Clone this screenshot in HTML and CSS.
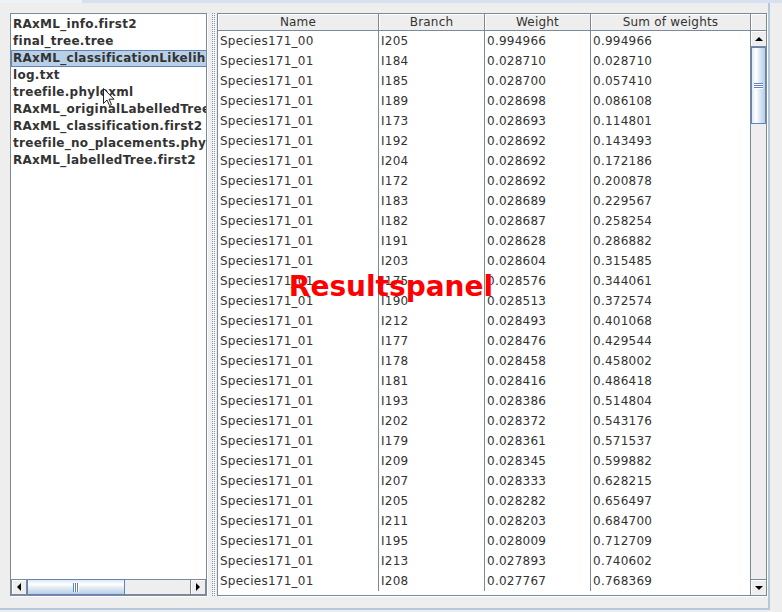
FILE: index.html
```html
<!DOCTYPE html>
<html>
<head>
<meta charset="utf-8">
<title>Results</title>
<link rel="stylesheet" href="styles.css">
</head>
<body>
<div class="tabline"><div class="tabline-sel"></div></div>
<div class="frame">
  <div class="pane pane-left">
    <div class="list">
      <div class="list-inner">
        <div class="item">RAxML_info.first2</div>
        <div class="item">final_tree.tree</div>
        <div class="item sel">RAxML_classificationLikelihoodWeights.first2</div>
        <div class="item">log.txt</div>
        <div class="item">treefile.phyloxml</div>
        <div class="item">RAxML_originalLabelledTree.first2</div>
        <div class="item">RAxML_classification.first2</div>
        <div class="item">treefile_no_placements.phyloxml</div>
        <div class="item">RAxML_labelledTree.first2</div>
      </div>
    </div>
    <div class="hscroll">
      <div class="sbtn"><span class="arrow-left"></span></div>
      <div class="hthumb"><span class="grip-v"></span></div>
      <div class="htrack"></div>
      <div class="sbtn"><span class="arrow-right"></span></div>
    </div>
  </div>
  <div class="divider"><div class="bumps"></div></div>
  <div class="pane pane-right">
    <div class="thead">
      <div class="th">Name</div>
      <div class="th">Branch</div>
      <div class="th">Weight</div>
      <div class="th">Sum of weights</div>
    </div>
    <div class="corner"></div>
    <div class="tbody">
      <div class="tr"><div class="td">Species171_00</div><div class="td">I205</div><div class="td">0.994966</div><div class="td">0.994966</div></div>
      <div class="tr"><div class="td">Species171_01</div><div class="td">I184</div><div class="td">0.028710</div><div class="td">0.028710</div></div>
      <div class="tr"><div class="td">Species171_01</div><div class="td">I185</div><div class="td">0.028700</div><div class="td">0.057410</div></div>
      <div class="tr"><div class="td">Species171_01</div><div class="td">I189</div><div class="td">0.028698</div><div class="td">0.086108</div></div>
      <div class="tr"><div class="td">Species171_01</div><div class="td">I173</div><div class="td">0.028693</div><div class="td">0.114801</div></div>
      <div class="tr"><div class="td">Species171_01</div><div class="td">I192</div><div class="td">0.028692</div><div class="td">0.143493</div></div>
      <div class="tr"><div class="td">Species171_01</div><div class="td">I204</div><div class="td">0.028692</div><div class="td">0.172186</div></div>
      <div class="tr"><div class="td">Species171_01</div><div class="td">I172</div><div class="td">0.028692</div><div class="td">0.200878</div></div>
      <div class="tr"><div class="td">Species171_01</div><div class="td">I183</div><div class="td">0.028689</div><div class="td">0.229567</div></div>
      <div class="tr"><div class="td">Species171_01</div><div class="td">I182</div><div class="td">0.028687</div><div class="td">0.258254</div></div>
      <div class="tr"><div class="td">Species171_01</div><div class="td">I191</div><div class="td">0.028628</div><div class="td">0.286882</div></div>
      <div class="tr"><div class="td">Species171_01</div><div class="td">I203</div><div class="td">0.028604</div><div class="td">0.315485</div></div>
      <div class="tr"><div class="td">Species171_01</div><div class="td">I175</div><div class="td">0.028576</div><div class="td">0.344061</div></div>
      <div class="tr"><div class="td">Species171_01</div><div class="td">I190</div><div class="td">0.028513</div><div class="td">0.372574</div></div>
      <div class="tr"><div class="td">Species171_01</div><div class="td">I212</div><div class="td">0.028493</div><div class="td">0.401068</div></div>
      <div class="tr"><div class="td">Species171_01</div><div class="td">I177</div><div class="td">0.028476</div><div class="td">0.429544</div></div>
      <div class="tr"><div class="td">Species171_01</div><div class="td">I178</div><div class="td">0.028458</div><div class="td">0.458002</div></div>
      <div class="tr"><div class="td">Species171_01</div><div class="td">I181</div><div class="td">0.028416</div><div class="td">0.486418</div></div>
      <div class="tr"><div class="td">Species171_01</div><div class="td">I193</div><div class="td">0.028386</div><div class="td">0.514804</div></div>
      <div class="tr"><div class="td">Species171_01</div><div class="td">I202</div><div class="td">0.028372</div><div class="td">0.543176</div></div>
      <div class="tr"><div class="td">Species171_01</div><div class="td">I179</div><div class="td">0.028361</div><div class="td">0.571537</div></div>
      <div class="tr"><div class="td">Species171_01</div><div class="td">I209</div><div class="td">0.028345</div><div class="td">0.599882</div></div>
      <div class="tr"><div class="td">Species171_01</div><div class="td">I207</div><div class="td">0.028333</div><div class="td">0.628215</div></div>
      <div class="tr"><div class="td">Species171_01</div><div class="td">I205</div><div class="td">0.028282</div><div class="td">0.656497</div></div>
      <div class="tr"><div class="td">Species171_01</div><div class="td">I211</div><div class="td">0.028203</div><div class="td">0.684700</div></div>
      <div class="tr"><div class="td">Species171_01</div><div class="td">I195</div><div class="td">0.028009</div><div class="td">0.712709</div></div>
      <div class="tr"><div class="td">Species171_01</div><div class="td">I213</div><div class="td">0.027893</div><div class="td">0.740602</div></div>
      <div class="tr"><div class="td">Species171_01</div><div class="td">I208</div><div class="td">0.027767</div><div class="td">0.768369</div></div>
    </div>
    <div class="vscroll">
      <div class="vbtn"><span class="arrow-up"></span></div>
      <div class="vthumb"><span class="grip-h"></span></div>
      <div class="vtrack"></div>
      <div class="vbtn vbtn-down"><span class="arrow-down"></span></div>
    </div>
  </div>
</div>
<div class="title-overlay">Resultspanel</div>
<svg class="cursor" width="13" height="19" viewBox="0 0 13 19" xmlns="http://www.w3.org/2000/svg">
  <path d="M0.5 0.5 L0.5 15.5 L4 12 L6.5 17.5 L8.5 16.6 L6.1 11.2 L11 11.2 Z" fill="#ffffff" stroke="#222222" stroke-width="1"/>
</svg>
</body>
</html>
```

FILE: styles.css
```css
body {
  margin: 0;
  width: 782px;
  height: 612px;
  background: #eeeeee;
  font-family: "DejaVu Sans", sans-serif;
  position: relative;
  overflow: hidden;
}

.tabline {
  height: 3px;
  background: #d5e1ee;
}

.tabline-sel {
  width: 82px;
  height: 3px;
  background: #eef3f8;
}

.frame {
  display: flex;
  box-sizing: border-box;
  width: 770px;
  height: 607px;
  padding: 10px 0 12px 10px;
  border-right: 2px solid #b4c8dc;
  border-bottom: 2px solid #b4c8dc;
}

.pane {
  box-sizing: border-box;
  border: 1px solid #7a8a99;
  box-shadow: 1px 1px 0 #ffffff;
  background: #ffffff;
}

.pane-left {
  width: 197px;
  margin-right: 1px;
  display: flex;
  flex-direction: column;
}

.list {
  flex: 1;
  overflow: hidden;
  background: #ffffff;
  padding-top: 2px;
}

.list-inner {
  width: 360px;
}

.item {
  height: 17px;
  line-height: 17px;
  padding-left: 2px;
  font-weight: bold;
  font-size: 12px;
  letter-spacing: 0.28px;
  color: #333333;
  white-space: nowrap;
}

.item.sel {
  background: #b8cfe5;
  box-shadow: inset 0 0 0 1px #6382bf;
}

.hscroll {
  height: 16px;
  display: flex;
  background: #eeeeee;
}

.sbtn {
  width: 16px;
  height: 16px;
  box-sizing: border-box;
  border: 1px solid #7a8a99;
  box-shadow: inset 1px 1px 0 #ffffff;
  background: #eeeeee;
  display: flex;
  align-items: center;
  justify-content: center;
}

.arrow-left {
  width: 0;
  height: 0;
  border-top: 4px solid transparent;
  border-bottom: 4px solid transparent;
  border-right: 4px solid #000000;
}

.arrow-right {
  width: 0;
  height: 0;
  border-top: 4px solid transparent;
  border-bottom: 4px solid transparent;
  border-left: 4px solid #000000;
}

.hthumb {
  width: 98px;
  box-sizing: border-box;
  border: 1px solid #6382bf;
  background: linear-gradient(to bottom, #dde8f3 0%, #ffffff 30%, #dde8f3 60%, #b8cfe5 100%);
  display: flex;
  align-items: center;
  justify-content: center;
}

.grip-v {
  width: 6px;
  height: 9px;
  background: repeating-linear-gradient(to right, #6382bf 0 1px, #ffffff 1px 2px);
}

.htrack {
  flex: 1;
  background: #eeeeee;
  border-top: 1px solid #7a8a99;
  border-bottom: 1px solid #7a8a99;
}

.divider {
  width: 9px;
  display: flex;
  padding-left: 4px;
  box-sizing: border-box;
}

.bumps {
  width: 4px;
  background:
    conic-gradient(at 1px 1px, transparent 75%, #8b99a8 0) 0 0 / 2px 2px,
    conic-gradient(at 1px 1px, transparent 75%, #ffffff 0) 1px 1px / 2px 2px;
}

.pane-right {
  width: 550px;
  margin-right: 1px;
  display: grid;
  grid-template-columns: 532px 16px;
  grid-template-rows: 17px 1fr;
}

.thead {
  display: grid;
  grid-template-columns: 161px 106px 106px 159px;
  background: #eeeeee;
}

.th {
  box-sizing: border-box;
  height: 17px;
  padding-top: 1px;
  border-right: 1px solid #7a8a99;
  border-bottom: 1px solid #7a8a99;
  box-shadow: inset 1px 1px 0 #ffffff;
  text-align: center;
  font-size: 12px;
  letter-spacing: 0.2px;
  line-height: 15px;
  color: #333333;
  white-space: nowrap;
}

.th:last-child {
  border-right: none;
}

.corner {
  box-sizing: border-box;
  background: #eeeeee;
  border-left: 1px solid #7a8a99;
  border-bottom: 1px solid #7a8a99;
  box-shadow: inset 1px 1px 0 #ffffff;
}

.tbody {
  overflow: hidden;
  background: #ffffff;
}

.tr {
  display: grid;
  grid-template-columns: 161px 106px 106px 159px;
  height: 20px;
}

.td {
  box-sizing: border-box;
  border-right: 1px solid #7a8a99;
  padding-left: 2px;
  font-size: 12px;
  letter-spacing: 0.25px;
  line-height: 20px;
  color: #333333;
  white-space: nowrap;
  overflow: hidden;
}

.td:last-child {
  border-right: none;
}

.vscroll {
  display: flex;
  flex-direction: column;
  background: #eeeeee;
  border-left: 1px solid #7a8a99;
}

.vbtn {
  height: 16px;
  box-sizing: border-box;
  border-bottom: 1px solid #7a8a99;
  box-shadow: inset 1px 1px 0 #ffffff;
  background: #eeeeee;
  display: flex;
  align-items: center;
  justify-content: center;
}

.vbtn-down {
  border-bottom: none;
  border-top: 1px solid #7a8a99;
}

.arrow-up {
  width: 0;
  height: 0;
  border-left: 4px solid transparent;
  border-right: 4px solid transparent;
  border-bottom: 4px solid #000000;
}

.arrow-down {
  width: 0;
  height: 0;
  border-left: 4px solid transparent;
  border-right: 4px solid transparent;
  border-top: 4px solid #000000;
}

.vthumb {
  height: 77px;
  box-sizing: border-box;
  border: 1px solid #6382bf;
  background: linear-gradient(to right, #dde8f3 0%, #ffffff 30%, #dde8f3 60%, #b8cfe5 100%);
  display: flex;
  align-items: center;
  justify-content: center;
}

.grip-h {
  width: 9px;
  height: 6px;
  background: repeating-linear-gradient(to bottom, #6382bf 0 1px, #ffffff 1px 2px);
}

.vtrack {
  flex: 1;
}

.title-overlay {
  position: absolute;
  left: 0;
  top: 273px;
  width: 782px;
  text-align: center;
  font-family: "DejaVu Sans", sans-serif;
  font-weight: bold;
  font-size: 28px;
  line-height: 28px;
  color: #ff0000;
  pointer-events: none;
}

.cursor {
  position: absolute;
  left: 103px;
  top: 88px;
}
```
